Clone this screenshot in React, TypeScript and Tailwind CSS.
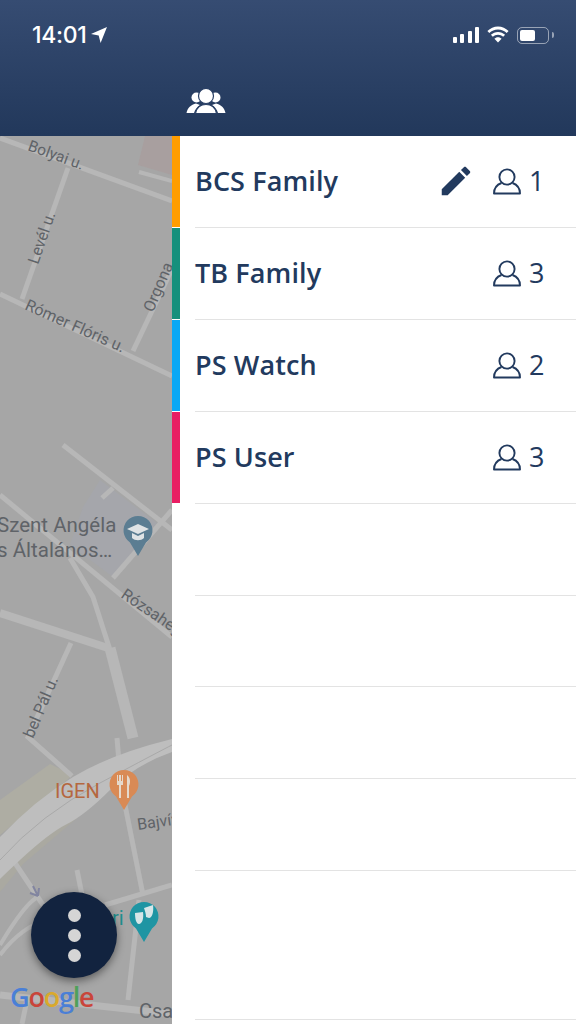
const rows = [
  { name: "BCS Family", count: 1, bar: "bg-[#ff9d00]", edit: true },
  { name: "TB Family", count: 3, bar: "bg-[#16907c]", edit: false },
  { name: "PS Watch", count: 2, bar: "bg-[#0aa8f5]", edit: false },
  { name: "PS User", count: 3, bar: "bg-[#e91e63]", edit: false },
]

function PersonIcon() {
  return (
    <svg width="28" height="27" viewBox="0 0 28 27" fill="none" stroke="#223a5e" strokeWidth="1.9">
      <circle cx="14" cy="9" r="7.6" />
      <path d="M8.500 15C4.500 16.500 1 20 1 25.500H27C27 20 23.500 16.500 19.500 15" strokeLinejoin="round" />
    </svg>
  )
}

function PenIcon() {
  return (
    <svg width="38" height="38" viewBox="0 0 24 24" fill="#223a5e">
      <path d="M3 17.25V21h3.75L17.81 9.94l-3.75-3.75L3 17.25zM20.71 7.04c.39-.39.39-1.02 0-1.41l-2.34-2.34c-.39-.39-1.02-.39-1.41 0l-1.83 1.83 3.75 3.75 1.83-1.83z" />
    </svg>
  )
}

function StatusBar() {
  return (
    <div className="flex items-center justify-between h-[70px] pl-8 pr-[22px] text-white">
      <div className="flex items-center gap-[4px]">
        <span className="font-['Inter',sans-serif] font-medium text-[23px] tracking-[-0.3px]">14:01</span>
        <svg width="16" height="16" viewBox="0 0 15 15" fill="white">
          <path d="M15 0 L9 15 L7.2 8 L0 6.600 Z" />
        </svg>
      </div>
      <div className="flex items-center gap-[7px]">
        <div className="flex items-end gap-[3.33px] h-4">
          <div className="w-[4px] h-[6px] rounded-[1px] bg-white" />
          <div className="w-[4px] h-[9px] rounded-[1px] bg-white" />
          <div className="w-[4px] h-[12px] rounded-[1px] bg-white" />
          <div className="w-[4px] h-[16px] rounded-[1px] bg-white" />
        </div>
        <svg width="24" height="18" viewBox="0 0 24 18" fill="white">
          <path d="M12 3.600c3.400 0 6.400 1.300 8.700 3.500l1.900-2C19.800 2.300 16.100.5 12 .5S4.200 2.300 1.400 5.100l1.900 2C5.600 4.900 8.600 3.600 12 3.600z" />
          <path d="M12 8.700c2 0 3.800.8 5.200 2l1.900-2C17.200 7 14.700 5.900 12 5.900S6.800 7 4.900 8.700l1.900 2c1.400-1.200 3.200-2 5.200-2z" />
          <path d="M12 11.200c-1.500 0-2.700.6-3.600 1.500L12 16.500l3.600-3.800c-.9-.9-2.100-1.500-3.600-1.500z" />
        </svg>
        <div className="flex items-center gap-[3px]">
          <div className="w-[32px] h-[17px] rounded-[5px] border border-white/50 p-[2px]">
            <div className="w-[15px] h-full rounded-[2px] bg-white" />
          </div>
          <div className="w-[2px] h-[6px] rounded-r-[2px] bg-white/50" />
        </div>
      </div>
    </div>
  )
}

function GroupIcon() {
  return (
    <svg width="40" height="26" viewBox="0 0 40 26" fill="white">
      <circle cx="10.500" cy="9.500" r="5" />
      <circle cx="29.500" cy="9.500" r="5" />
      <path d="M0.500 25C1.500 20 5 16.500 10 15.500L14 17C11 19 9 21.500 8 25Z" />
      <path d="M39.500 25C38.500 20 35 16.500 30 15.500L26 17C29 19 31 21.500 32 25Z" />
      <circle cx="20" cy="8" r="7.500" stroke="#2a4066" strokeWidth="1.200" />
      <path d="M9.500 25.500C10.500 20 14 16.500 20 16.500S29.500 20 30.500 25.500Z" stroke="#2a4066" strokeWidth="1.200" />
    </svg>
  )
}

function Pin({ x, y, fill }: { x: number; y: number; fill: string }) {
  return (
    <path
      d={`M${x} ${y + 26}L${x - 8} ${y + 12.500}A14.500 14.500 0 1 1 ${x + 8} ${y + 12.500}Z`}
      fill={fill}
    />
  )
}

function MapView() {
  const road = "#b7b7b7"
  const label = "font-['Roboto',sans-serif] fill-[#5f6368]"
  return (
    <div className="relative w-[172px] shrink-0 overflow-hidden bg-[#a6a6a6]">
      <svg width="172" height="888" viewBox="0 136 172 888" fill="none">
        <path d="M145 136H172V175L138 165Z" fill="#a89f9f" />
        <path d="M83 507L100 480L157 523L113 577L70 545Z" fill="#a5a6ab" />
        <path d="M0 800L50 764L73 775L0 835Z" fill="#aeada3" />
        <path d="M0 892L23 864L110 790L93 800L23 845L0 870Z" fill="#aaa9a1" />
        <g stroke={road} strokeLinecap="butt">
          <path d="M0 138L172 201" strokeWidth="5" />
          <path d="M139 172L172 181" strokeWidth="4" />
          <path d="M68 168L22 299" strokeWidth="5" />
          <path d="M0 294L172 376" strokeWidth="5" />
          <path d="M133 351L172 269" strokeWidth="5" />
          <path d="M63 445L172 530" strokeWidth="5" />
          <path d="M102 498L113 488" strokeWidth="5" />
          <path d="M113 578L172 510" strokeWidth="5" />
          <path d="M0 495L172 637" strokeWidth="5" />
          <path d="M70 558L93 597L110 650" strokeWidth="5" />
          <path d="M0 613L108 648" strokeWidth="8" />
          <path d="M110 648L133 738" strokeWidth="11" />
          <path d="M71 643L28 737L72 776" strokeWidth="5" />
          <path d="M117 738L119 762" strokeWidth="5" />
          <path d="M125 805L143 895" strokeWidth="5" />
          <path d="M172 885L105 905" strokeWidth="5" />
          <path d="M77 870L82 895" strokeWidth="5" />
          <path d="M15 863L43 905" strokeWidth="5" />
          <path d="M0 945C12 925 25 905 36 898" strokeWidth="4" />
          <path d="M0 955C15 935 30 925 50 918" strokeWidth="4" />
          <path d="M139 900L128 1000" strokeWidth="5" />
          <path d="M0 995L172 1014" strokeWidth="7" />
          <path d="M27 1000L22 1024" strokeWidth="5" />
        </g>
        <path d="M0 837Q35 800 73 777T172 739V752Q135 765 110 790T67 824T20 860T0 880Z" fill="#bebebe" />
        <path d="M0 860Q40 815 100 783T172 745" stroke="#a9a9a9" strokeWidth="1" />
        <path d="M33 886L38 896M38 896L30 893M38 896L39 888" stroke="#8285a0" strokeWidth="2" />
        <text x="0" y="0" fontSize="15.500" transform="translate(27 150) rotate(20)" className={label}>Bolyai u.</text>
        <text x="0" y="0" fontSize="16" transform="translate(38 265) rotate(-71)" className={label}>Levél u.</text>
        <text x="0" y="0" fontSize="16" transform="translate(24 309) rotate(24)" className={label}>Rómer Flóris u.</text>
        <text x="0" y="0" fontSize="16" transform="translate(153 313) rotate(-67)" className={label}>Orgona</text>
        <text x="-3" y="532" fontSize="20.500" className={label}>Szent Angéla</text>
        <text x="-3" y="557" fontSize="20.500" className={label}>s Általános…</text>
        <text x="0" y="0" fontSize="16" transform="translate(120 597) rotate(34)" className={label}>Rózsahegy</text>
        <text x="0" y="0" fontSize="16" transform="translate(33 739) rotate(-67)" className={label}>bel Pál u.</text>
        <text x="55" y="798" fontSize="20" className="font-['Roboto',sans-serif] fill-[#b5673f]">IGEN</text>
        <text x="0" y="0" fontSize="16" transform="translate(138 830) rotate(-8)" className={label}>Bajvív</text>
        <text x="112" y="925" fontSize="20" className="font-['Roboto',sans-serif] fill-[#1f8f8f]">ri</text>
        <text x="139" y="1018" fontSize="20" className={label}>Csa</text>
        <Pin x={138} y={530} fill="#5b7d92" />
        <path d="M127 529L138 524L149 529L138 534Z M132 533V538C135 541 141 541 144 538V533L138 536Z" fill="#dfe3e5" />
        <Pin x={124} y={784} fill="#d98a55" />
        <path d="M117 775V785H119V798H121V785H123V775H122V781H121V775H119V781H118V775ZM127 775C130 777 131 782 129 786V798H127Z" fill="#e5d9cc" />
        <Pin x={144} y={916} fill="#1f95a3" />
        <path d="M135 913L143 912C144 919 142 924 139 924C136 924 135 918 135 913ZM144 908L153 905C154 912 152 918 149 918L146 917C146 914 145 911 144 908Z" fill="#d7e6e8" />
      </svg>
      <div className="absolute left-[31px] top-[756px] w-[86px] h-[86px] rounded-full bg-[#12233f] shadow-[0_3px_8px_rgba(0,0,0,0.45)] flex flex-col items-center justify-center gap-[7px]">
        <div className="w-[13px] h-[13px] rounded-full bg-[#d5d5d5]" />
        <div className="w-[13px] h-[13px] rounded-full bg-[#d5d5d5]" />
        <div className="w-[13px] h-[13px] rounded-full bg-[#d5d5d5]" />
      </div>
      <div className="absolute left-[10px] top-[841px] font-['Open_Sans',sans-serif] font-semibold text-[27px] leading-[40px] tracking-[-1.2px]">
        <span className="text-[#4a7fd6]">G</span>
        <span className="text-[#c9453a]">o</span>
        <span className="text-[#d9a92c]">o</span>
        <span className="text-[#4a7fd6]">g</span>
        <span className="text-[#4fa05a]">l</span>
        <span className="text-[#c9453a]">e</span>
      </div>
    </div>
  )
}

export default function App() {
  return (
    <div className="w-[576px] h-[1024px] flex flex-col overflow-hidden bg-white font-['Open_Sans',sans-serif]">
      <header className="h-[136px] shrink-0 bg-gradient-to-b from-[#364c72] to-[#22385b]">
        <StatusBar />
        <div className="w-[172px] flex justify-end mt-[18px]">
          <div className="translate-x-[54px]">
            <GroupIcon />
          </div>
        </div>
      </header>
      <div className="flex flex-1 min-h-0">
        <MapView />
        <div className="flex-1 flex flex-col">
          {rows.map((r) => (
            <div key={r.name} className="h-[92px] flex">
              <div className={`w-2 h-[91px] ${r.bar}`} />
              <div className="flex-1 ml-[15px] border-b-[1.5px] border-[#e3e3e3] flex items-center justify-between pr-8 pb-[1px]">
                <span className="text-[27px] font-[550] text-[#223a5e] tracking-[0.1px]">{r.name}</span>
                <div className="flex items-center">
                  {r.edit && (
                    <div className="mr-[18px]">
                      <PenIcon />
                    </div>
                  )}
                  <PersonIcon />
                  <span className="w-[15px] ml-[8px] text-[27px] text-[#223a5e]">{r.count}</span>
                </div>
              </div>
            </div>
          ))}
          <div className="h-[92px] ml-[23px] border-b-[1.5px] border-[#e3e3e3]" />
          <div className="h-[91px] ml-[23px] border-b-[1.5px] border-[#e3e3e3]" />
          <div className="h-[92px] ml-[23px] border-b-[1.5px] border-[#e3e3e3]" />
          <div className="h-[92px] ml-[23px] border-b-[1.5px] border-[#e3e3e3]" />
          <div className="h-[149px] ml-[23px] border-b-[1.5px] border-[#e3e3e3]" />
        </div>
      </div>
    </div>
  )
}
